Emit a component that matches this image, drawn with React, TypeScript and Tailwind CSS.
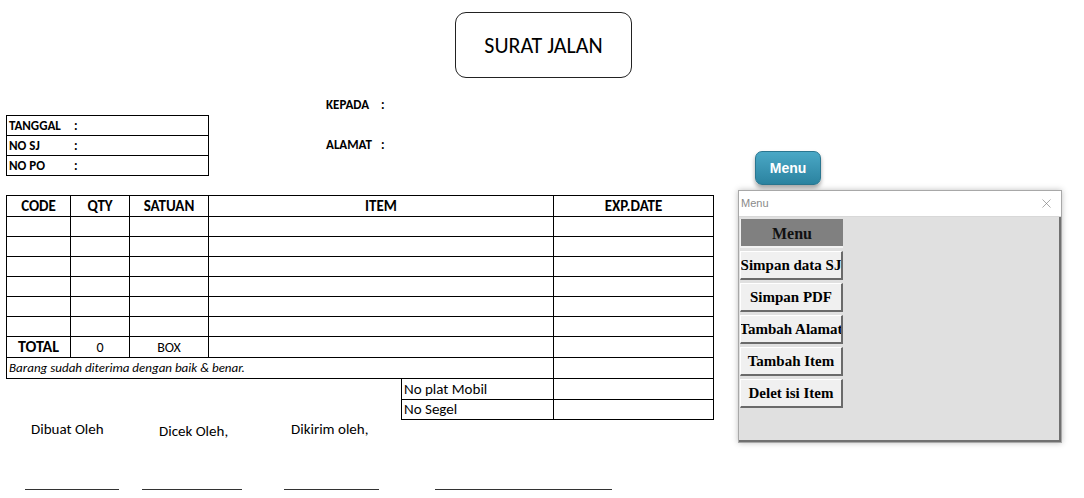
import { X } from "lucide-react";

const rows = [1, 2, 3, 4, 5, 6];

const menuButtons = [
  "Simpan data SJ",
  "Simpan PDF",
  "Tambah Alamat",
  "Tambah Item",
  "Delet isi Item",
];

function Cell({
  children,
  className = "",
}: {
  children?: React.ReactNode;
  className?: string;
}) {
  return (
    <div
      className={`flex items-center justify-center border-r border-b border-black ${className}`}
    >
      {children}
    </div>
  );
}

export default function App() {
  return (
    <div className="relative h-[498px] w-[1084px] overflow-hidden bg-white font-['Carlito','Lato',sans-serif] text-black">
      {/* judul */}
      <div className="pt-[12px]">
        <div className="ml-[455px] flex h-[66px] w-[177px] items-center justify-center rounded-[11px] border border-[#222] text-[22px]">
          SURAT JALAN
        </div>
      </div>

      {/* info */}
      <div className="flex items-start">
        <div className="ml-[6px] mt-[37px] w-[203px] border-t border-l border-black text-[13px] font-bold">
          {["TANGGAL", "NO SJ", "NO PO"].map((label) => (
            <div
              key={label}
              className="flex h-[20px] items-center border-r border-b border-black pl-[2px]"
            >
              <span className="w-[65px]">{label}</span>
              <span>:</span>
            </div>
          ))}
        </div>
        <div className="ml-[117px] mt-[20px] text-[13px] font-bold">
          <div className="flex h-[14px] items-center">
            <span className="w-[55px]">KEPADA</span>
            <span>:</span>
          </div>
          <div className="mt-[26px] flex h-[14px] items-center">
            <span className="w-[55px]">ALAMAT</span>
            <span>:</span>
          </div>
        </div>
      </div>

      {/* tabel barang */}
      <div className="ml-[6px] mt-[19px]">
        <div className="grid w-[708px] grid-cols-[64px_59px_79px_345px_160px] border-t border-l border-black text-[15px]">
          <Cell className="h-[21px] font-bold">CODE</Cell>
          <Cell className="h-[21px] font-bold">QTY</Cell>
          <Cell className="h-[21px] font-bold">SATUAN</Cell>
          <Cell className="h-[21px] font-bold">ITEM</Cell>
          <Cell className="h-[21px] font-bold">EXP.DATE</Cell>
          {rows.map((r) => (
            <div key={r} className="contents">
              <Cell className="h-[20px]" />
              <Cell className="h-[20px]" />
              <Cell className="h-[20px]" />
              <Cell className="h-[20px]" />
              <Cell className="h-[20px]" />
            </div>
          ))}
          <Cell className="h-[21px] text-[16px] font-bold">TOTAL</Cell>
          <Cell className="h-[21px] text-[14px]">0</Cell>
          <Cell className="h-[21px] text-[14px]">BOX</Cell>
          <Cell className="h-[21px]" />
          <Cell className="h-[21px]" />
          <Cell className="col-span-4 h-[21px] justify-start pl-[2px] text-[13px] italic">
            Barang sudah diterima dengan baik &amp; benar.
          </Cell>
          <Cell className="h-[21px]" />
        </div>
        <div className="ml-[395px] grid w-[313px] grid-cols-[152px_160px] border-l border-black text-[15px]">
          <Cell className="h-[21px] justify-start pl-[2px]">No plat Mobil</Cell>
          <Cell className="h-[21px]" />
          <Cell className="h-[20px] justify-start pl-[2px]">No Segel</Cell>
          <Cell className="h-[20px]" />
        </div>
      </div>

      {/* tanda tangan */}
      <div className="flex items-start text-[15px] leading-[18px]">
        <span className="ml-[31px] w-[128px]">Dibuat Oleh</span>
        <span className="mt-[2px] w-[132px]">Dicek Oleh,</span>
        <span>Dikirim oleh,</span>
      </div>
      <div className="mt-[49px] flex">
        <div className="ml-[25px] h-px w-[94px] bg-[#333]" />
        <div className="ml-[23px] h-px w-[100px] bg-[#333]" />
        <div className="ml-[42px] h-px w-[95px] bg-[#333]" />
        <div className="ml-[56px] h-px w-[177px] bg-[#333]" />
      </div>

      {/* tombol Menu di lembar kerja */}
      <button className="absolute top-[151px] left-[755px] flex h-[34px] w-[66px] items-center justify-center rounded-[7px] border border-[#2a7690] bg-gradient-to-b from-[#4aa8c6] to-[#2b83a0] font-['Liberation_Sans',sans-serif] text-[14px] font-bold text-white shadow-[0_3px_4px_rgba(0,0,0,0.35)]">
        Menu
      </button>

      {/* UserForm Menu */}
      <div className="absolute top-[190px] left-[738px] flex h-[253px] w-[324px] flex-col border border-[#a8a8a8] bg-white shadow-[0_0_6px_rgba(0,0,0,0.25)]">
        <div className="flex h-[26px] items-center justify-between border-b border-[#d8d8d8] pl-[2px] pr-[7px] font-['Liberation_Sans',sans-serif] text-[11px] text-[#8a8a8a]">
          <span>Menu</span>
          <X size={15} strokeWidth={1} className="text-[#777]" />
        </div>
        <div className="flex flex-1 flex-col gap-[3px] border-r-2 border-b-2 border-[#707070] bg-[#e0e0e0] pt-[2px] pl-[1px] font-['Liberation_Serif',serif] text-[15px] font-bold">
          <div className="flex h-[29px] w-[103px] items-center justify-center border-l border-b-2 border-[#f2f2f2] bg-[#808080] pt-[2px] text-[16px] text-[#111]">
            Menu
          </div>
          {menuButtons.map((b) => (
            <div
              key={b}
              className="flex h-[29px] w-[103px] items-center justify-center overflow-hidden whitespace-nowrap border-t border-l border-white border-r-2 border-b-2 border-r-[#6a6a6a] border-b-[#6a6a6a] bg-[#f0f0f0]"
            >
              {b}
            </div>
          ))}
        </div>
      </div>
    </div>
  );
}
